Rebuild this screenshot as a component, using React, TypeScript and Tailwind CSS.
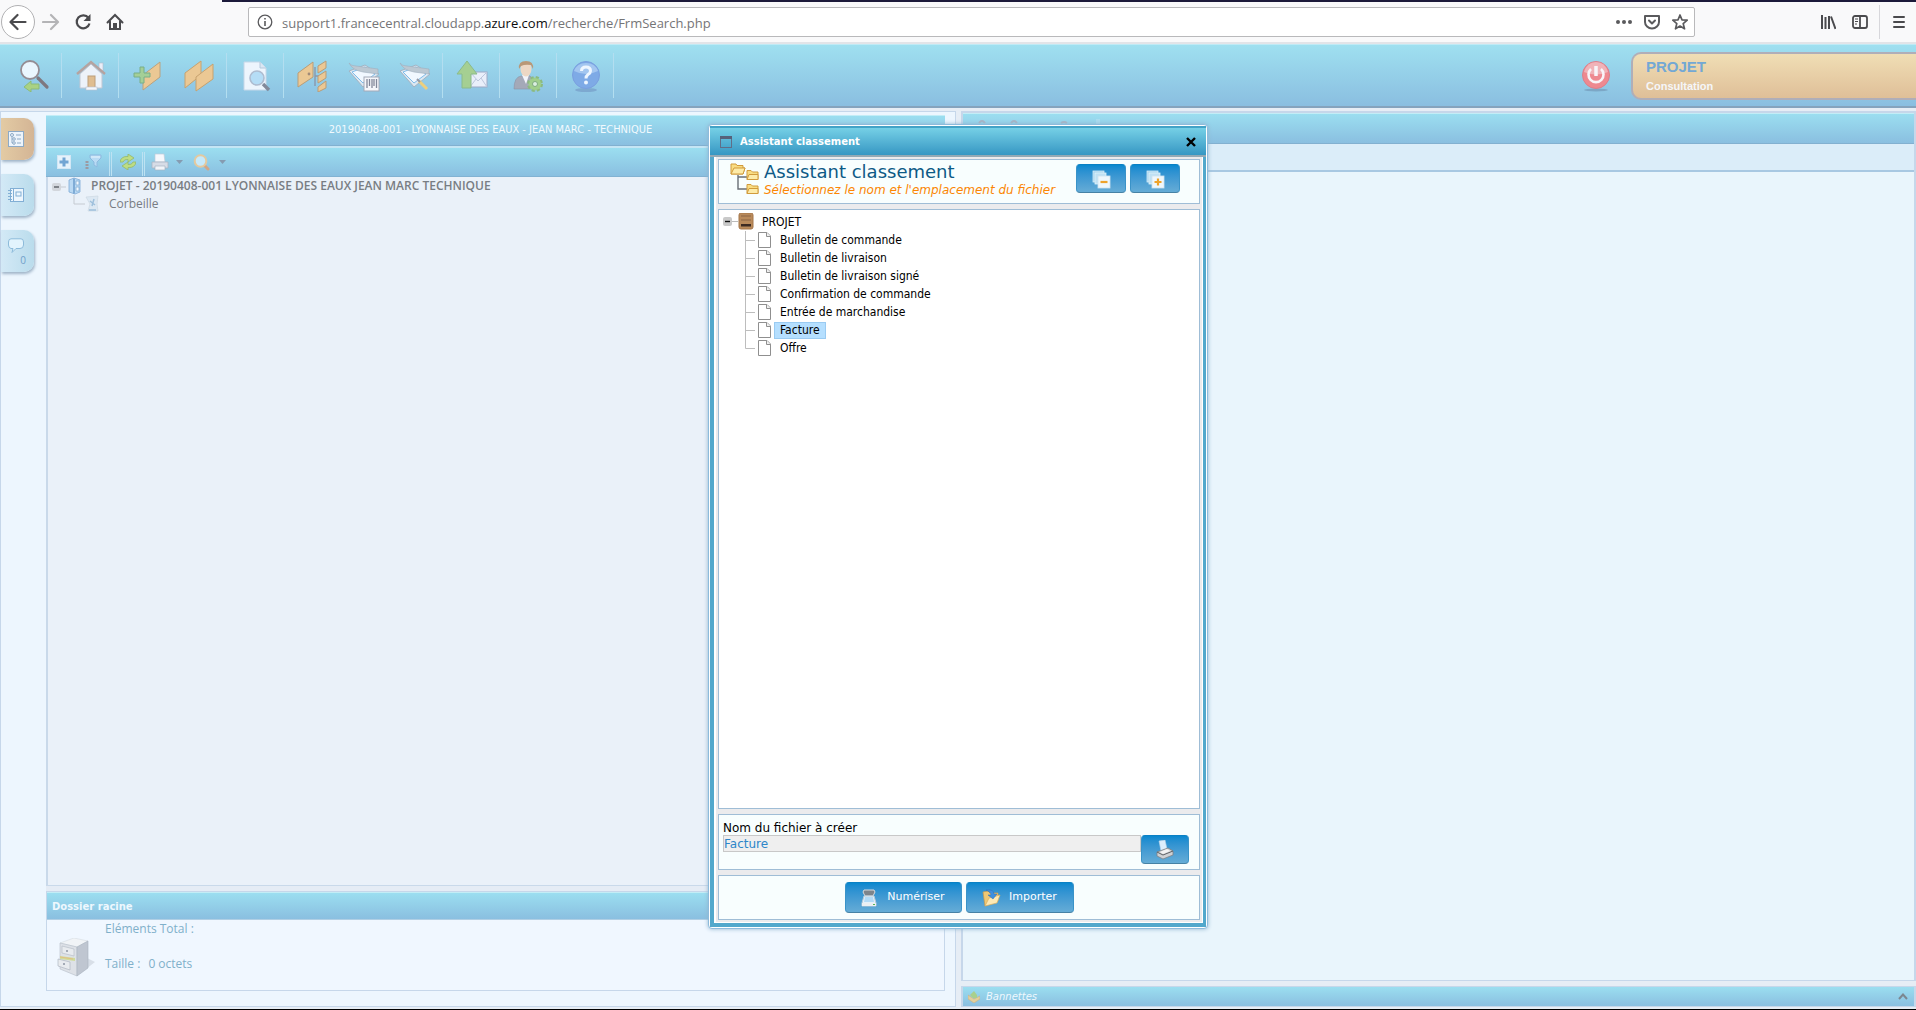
import React from "react";

const glossy = "bg-linear-to-b from-[#9bdef0] to-[#8abfe0]";
const tahoma = "font-['DejaVu_Sans_Condensed','DejaVu_Sans',sans-serif]";
const verdana = "font-['DejaVu_Sans',sans-serif]";
const treb = "font-['Open_Sans',sans-serif]";

function ToolButton({ label, children }: { label: string; children: React.ReactNode }) {
  return (
    <button type="button" aria-label={label} className="flex w-[51px] items-center justify-center">
      <svg width="32" height="32" viewBox="0 0 32 32" aria-hidden="true">
        {children}
      </svg>
    </button>
  );
}

function ToolGroup({ children }: { children: React.ReactNode }) {
  return <div className="flex h-[45px] border-r border-[#b3def0] pr-[2px] pl-[3px]">{children}</div>;
}

function Scanner() {
  return (
    <g>
      <path d="M1 11 L17 5 L31 14 L15 27 Z" fill="#dce8f2" stroke="#a3b3c2" />
      <path d="M4 12 L17 7 L27 14 L15 23 Z" fill="#f1f8ff" stroke="#7fbbe8" />
      <path d="M1 3 Q3 6 8 6 L30 9 L30 14 L15 12 Q4 10 1 3 Z" fill="#bcc8d2" stroke="#a0afbd" strokeWidth=".6" />
    </g>
  );
}

function MainToolbar() {
  return (
    <header className="flex h-16 shrink-0 items-center justify-between border-t border-b-2 border-t-[#bfeaf5] border-b-[#85a3bd] bg-linear-to-b from-[#9fe0f0] to-[#8abee0]">
      <nav className="flex items-center pl-[5px]" aria-label="Outils">
        <ToolGroup>
          <ToolButton label="Retour à la recherche">
            <path d="M20 18 L29 27" stroke="#7e7880" strokeWidth="3.2" strokeLinecap="round" />
            <circle cx="12" cy="10" r="9" fill="#eaf6fe" stroke="#958d94" strokeWidth="1.8" />
            <path d="M6 27 L13 21 V24 H21 V29 H13 V32 Z" fill="#a9d283" stroke="#8cbb78" />
          </ToolButton>
        </ToolGroup>
        <ToolGroup>
          <ToolButton label="Accueil">
            <rect x="24" y="3" width="4" height="8" fill="#e9eef8" stroke="#b5b9c8" strokeWidth=".6" />
            <path d="M5 14 L16 4 L27 14 V28 H5 Z" fill="#edf2f9" stroke="#c0c7d3" />
            <path d="M2 14 L16 2 L30 14" fill="none" stroke="#b5a3a0" strokeWidth="2.4" />
            <rect x="13" y="16" width="7" height="12" fill="#dfbd90" stroke="#bc9d7a" />
            <rect x="11" y="27" width="11" height="3" fill="#f3f6fb" stroke="#b9c1cf" strokeWidth=".6" />
          </ToolButton>
        </ToolGroup>
        <ToolGroup>
          <ToolButton label="Ajouter un dossier">
            <path d="M11 15 L28 2 V17 L11 30 Z" fill="#ebc894" stroke="#b9a280" />
            <path d="M8 7 h4 v6 h6 v4 h-6 v6 h-4 v-6 h-6 v-4 h6 Z" fill="#a4cf97" stroke="#79ae88" />
          </ToolButton>
          <ToolButton label="Dossiers">
            <path d="M2 13 L18 1 V15 L2 28 Z" fill="#ebc894" stroke="#c7a26f" />
            <path d="M13 17 L30 4 V19 L13 31 Z" fill="#ebc894" stroke="#c7a26f" />
          </ToolButton>
        </ToolGroup>
        <ToolGroup>
          <ToolButton label="Aperçu">
            <path d="M4 2 H20 L26 8 V30 H4 Z" fill="#edf5fd" stroke="#c6d7e8" />
            <path d="M20 2 V8 H26" fill="#dbe7f3" stroke="#b6c9dc" />
            <circle cx="17" cy="18" r="7" fill="#b5ddf6" stroke="#aebcd0" strokeWidth="1.6" />
            <path d="M23 24 L29 30" stroke="#82899a" strokeWidth="3.4" />
          </ToolButton>
        </ToolGroup>
        <ToolGroup>
          <ToolButton label="Arborescence">
            <path d="M1 13 L16 2 V17 L1 27 Z" fill="#ebc894" stroke="#b99d78" />
            <circle cx="12" cy="14" r="1.4" fill="#a08a78" />
            <path d="M18 7 V26 M18 16 H22" stroke="#8b98aa" strokeWidth="1.4" />
            <path d="M21 6 L29 1 V8 L21 13 Z M21 16 L29 11 V18 L21 23 Z M21 27 L29 21 V28 L21 32 Z" fill="#ebc894" stroke="#b99d78" />
          </ToolButton>
          <ToolButton label="Numériser code-barres">
            <Scanner />
            <rect x="16" y="17" width="15" height="14" fill="#f5f6fa" stroke="#a3a9b8" />
            <path d="M19 19 V28 M21.500 19 V26 M24 19 V28 M26 19 V26 M28.500 19 V28" stroke="#83889a" strokeWidth="1.300" />
          </ToolButton>
          <ToolButton label="Numériser">
            <Scanner />
            <path d="M20 21 L28 29" stroke="#edcf7c" strokeWidth="3" />
            <path d="M18 19 L21 22" stroke="#969ba8" strokeWidth="2" />
          </ToolButton>
        </ToolGroup>
        <ToolGroup>
          <ToolButton label="Envoyer">
            <rect x="14" y="12" width="17" height="15" fill="#e9effa" stroke="#9da9c6" />
            <path d="M14 12 L22 21 L31 12 M14 27 L20 19 M31 27 L25 18" fill="none" stroke="#bcc6dc" />
            <path d="M1 14 L11 1 L21 14 H15 V28 H6 V14 Z" fill="#a5cf92" stroke="#8bbb8a" />
          </ToolButton>
        </ToolGroup>
        <ToolGroup>
          <ToolButton label="Utilisateur">
            <path d="M1 29 Q1 17 8 16 L17 16 Q21 18 21 29 Z" fill="#a4a9b8" stroke="#8b93a6" strokeWidth=".6" />
            <path d="M9 15 L13 24 L16 15 Z" fill="#f3f5fb" />
            <ellipse cx="13" cy="9" rx="5.500" ry="7.500" fill="#edd8c5" />
            <path d="M6 9 Q5 1 13 1 Q21 1 20 9 L18 5 Q12 4 8 6 Z" fill="#b99877" />
            <circle cx="22" cy="24" r="6.500" fill="#a0cf8c" stroke="#8cba80" strokeWidth="3" strokeDasharray="3 2.100" />
            <circle cx="22" cy="24" r="6" fill="#a0cf8c" />
            <circle cx="22" cy="24" r="2.500" fill="#dcefe0" stroke="#7fac80" />
          </ToolButton>
        </ToolGroup>
        <ToolGroup>
          <ToolButton label="Aide">
            <ellipse cx="16" cy="30" rx="11" ry="2" fill="#7da9d0" />
            <circle cx="16" cy="15" r="13.500" fill="#7eaae6" stroke="#7a9fdf" />
            <path d="M4 11 Q7 3 16 3 Q25 3 28 11 Q16 17 4 11 Z" fill="#a3c6f0" />
            <path d="M11.500 11 Q11.500 7 16 7 Q20.500 7 20.500 11 Q20.500 13 18 14.500 Q16 16 16 18.500" fill="none" stroke="#eef6ff" strokeWidth="3" />
            <circle cx="16" cy="22.500" r="2" fill="#eef6ff" />
          </ToolButton>
        </ToolGroup>
      </nav>
      <div className="flex items-center gap-[21px]">
        <button type="button" aria-label="Déconnexion">
          <svg width="28" height="32" viewBox="0 0 28 32" aria-hidden="true">
            <ellipse cx="14" cy="30" rx="12" ry="1.500" fill="#7ca7c6" />
            <circle cx="14" cy="15" r="13.500" fill="#ee8990" stroke="#db7f8b" />
            <path d="M2 12 Q5 2 14 2 Q23 2 26 12 Q14 17 2 12 Z" fill="#f0b3b8" />
            <path d="M9 9 A7.500 7.500 0 1 0 19 9" fill="none" stroke="#f8f4f8" strokeWidth="2.600" />
            <path d="M14 6 V16" stroke="#f8f4f8" strokeWidth="3.500" />
          </svg>
        </button>
        <button type="button" className="flex h-12 w-[285px] flex-col justify-center rounded-l-[10px] border-2 border-r-0 border-[#b0aeb8] bg-linear-to-b from-[#f0deb5] to-[#dfbf98] pl-[13px] text-left font-['Liberation_Sans',sans-serif] font-bold">
          <span className="text-[15px] leading-5 text-[#73a8d4]">PROJET</span>
          <span className="text-[11px] leading-[18px] text-[#f5f6f9]">Consultation</span>
        </button>
      </div>
    </header>
  );
}

function BrowserBar() {
  return (
    <div className="flex h-11 shrink-0 flex-col border-b-2 border-[#e2e4e8] bg-[#f9f9fa]">
      <div className="ml-[222px] h-[2px] shrink-0 bg-[#1c1a3a]" />
      <div className="flex flex-1 items-center">
        <div className="flex w-[248px] items-center pl-px text-[#4a4a4d]">
          <button type="button" aria-label="Page précédente" className="flex size-[34px] items-center justify-center rounded-full border border-[#b1b1b3] bg-white">
            <svg width="18" height="18" viewBox="0 0 18 18" fill="none" stroke="currentColor" strokeWidth="2.200" strokeLinecap="round" strokeLinejoin="round"><path d="M16.500 9 H2 M8.500 2 L1.500 9 L8.500 16" /></svg>
          </button>
          <button type="button" aria-label="Page suivante" className="ml-[7px] text-[#b4b4b6]">
            <svg width="18" height="18" viewBox="0 0 18 18" fill="none" stroke="currentColor" strokeWidth="2.200" strokeLinecap="round" strokeLinejoin="round"><path d="M1 9 H15.500 M9 2 L16 9 L9 16" /></svg>
          </button>
          <button type="button" aria-label="Actualiser" className="ml-[14px]">
            <svg width="18" height="18" viewBox="0 0 18 18" fill="none" stroke="currentColor" strokeWidth="2.200"><path d="M14.500 5 A6.500 6.500 0 1 0 15.500 10.500" /><path d="M16.500 1 V8 H9.500 Z" fill="currentColor" stroke="none" /></svg>
          </button>
          <button type="button" aria-label="Accueil" className="ml-[14px]">
            <svg width="18" height="18" viewBox="0 0 18 18" fill="none" stroke="currentColor" strokeWidth="2"><path d="M1.500 9.500 L9 2 L16.500 9.500 M4 8.500 V16 H14 V8.500" strokeLinecap="round" /><path d="M8 16 V11 H10 V16" /></svg>
          </button>
        </div>
        <div className="flex h-[30px] flex-1 items-center rounded-[2px] border border-[#b9b9bb] bg-white pr-[6px] pl-2 text-[#5a5a5d]">
          <svg width="16" height="16" viewBox="0 0 16 16" fill="none" stroke="currentColor" strokeWidth="1.300" aria-hidden="true"><circle cx="8" cy="8" r="6.800" /><path d="M8 7 V12 M8 4 V5.500" strokeWidth="1.600" /></svg>
          <div className={`${treb} flex-1 pt-px pl-[9px] text-[13px] leading-5 text-[#757577]`}>
            support1.francecentral.cloudapp.<span className="text-[#0c0c0d]">azure.com</span>/recherche/FrmSearch.php
          </div>
          <div className="flex items-center gap-3">
            <button type="button" aria-label="Actions"><svg width="16" height="16" viewBox="0 0 16 16" fill="currentColor"><circle cx="2" cy="8" r="2" /><circle cx="8" cy="8" r="2" /><circle cx="14" cy="8" r="2" /></svg></button>
            <button type="button" aria-label="Pocket"><svg width="16" height="16" viewBox="0 0 16 16" fill="none" stroke="currentColor" strokeWidth="2" strokeLinecap="round" strokeLinejoin="round"><path d="M1 2 H15 V8 A7 6.500 0 0 1 1 8 Z M5 6.500 L8 9.500 L11 6.500" /></svg></button>
            <button type="button" aria-label="Marque-page"><svg width="16" height="16" viewBox="0 0 16 16" fill="none" stroke="currentColor" strokeWidth="1.700" strokeLinejoin="round"><path d="M8 1 L10 5.800 L15.200 6.200 L11.200 9.600 L12.500 14.800 L8 12 L3.500 14.800 L4.800 9.600 L.8 6.200 L6 5.800 Z" /></svg></button>
          </div>
        </div>
        <div className="flex w-[221px] items-center justify-end pr-[10px] text-[#4a4a4d]">
          <button type="button" aria-label="Bibliothèque"><svg width="16" height="16" viewBox="0 0 16 16" fill="none" stroke="currentColor" strokeWidth="2"><path d="M2 1 V15 M5.500 3 V15 M9 2 V15 M11 2.500 L15.500 15" /></svg></button>
          <button type="button" aria-label="Panneau latéral" className="ml-4"><svg width="16" height="16" viewBox="0 0 16 16" fill="none" stroke="currentColor" strokeWidth="1.800"><rect x="1" y="2" width="14" height="12" rx="2" /><path d="M8 2 V14" /><path d="M3 5 H6 M3 7.500 H6 M3 10 H5" strokeWidth="1" /></svg></button>
          <div className="ml-[11px] h-[34px] w-px bg-[#d7d7db]" />
          <button type="button" aria-label="Menu" className="ml-[12px]"><svg width="14" height="16" viewBox="0 0 14 16" stroke="currentColor" strokeWidth="2" strokeLinecap="round"><path d="M2 3 H12 M2 8 H12 M2 13 H12" /></svg></button>
        </div>
      </div>
    </div>
  );
}

function SideTabs() {
  const base = "flex h-[42px] w-[33px] rounded-r-[10px] shadow-[1px_2px_3px_#9fb4c8]";
  const blue = "bg-linear-to-r from-[#d3e9f6] to-[#badcec]";
  return (
    <div className="flex w-[45px] shrink-0 flex-col gap-[14px] pt-[6px]">
      <button type="button" aria-label="Arborescence" className={`${base} items-center bg-linear-to-r from-[#e3cba4] to-[#d4b595] pl-[7px]`}>
        <svg width="16" height="16" viewBox="0 0 16 16" fill="none" stroke="#8daac6" aria-hidden="true"><rect x=".5" y=".5" width="15" height="15" fill="#edf4fb" /><circle cx="4" cy="4" r="1.500" /><circle cx="6" cy="8" r="1.300" /><circle cx="6" cy="12" r="1.300" /><path d="M4 6 V12 H5 M8 4 H13 M9 8 H13 M9 12 H13" /></svg>
      </button>
      <button type="button" aria-label="Index" className={`${base} ${blue} items-center pl-[7px]`}>
        <svg width="16" height="16" viewBox="0 0 16 16" fill="none" stroke="#82afd5" aria-hidden="true"><rect x="2.500" y="1.500" width="13" height="13" fill="#edf6fd" /><path d="M5.500 2 V14 M0 3.500 H4 M0 6.500 H4 M0 9.500 H4 M0 12.500 H4" /><rect x="8" y="5" width="5" height="4" /></svg>
      </button>
      <button type="button" aria-label="Commentaires : 0" className={`${base} ${blue} flex-col pt-2 pl-[7px]`}>
        <svg width="16" height="15" viewBox="0 0 16 15" fill="#e3f4fd" stroke="#8dbbda" aria-hidden="true"><path d="M3 .8 H13 Q15.500 .8 15.500 4 V7 Q15.500 10.500 12 10.500 H8 L4 14.500 L5 10.500 H3 Q.5 10 .5 7 V4 Q.5 .8 3 .8 Z" /></svg>
        <span className={`${treb} w-[18px] text-right text-[10px] leading-[14px] text-[#70a0ca]`}>0</span>
      </button>
    </div>
  );
}

function TreeToolbar() {
  const sep = "h-6 w-[3px] border-x border-[#bde2f2] self-end";
  return (
    <div className={`flex h-[31px] shrink-0 items-center border-t-2 border-b border-t-[#c5e5f4] border-b-[#82b2d2] pl-[11px] ${glossy}`}>
      <button type="button" aria-label="Développer"><svg width="14" height="14" viewBox="0 0 14 14"><rect x=".5" y=".5" width="13" height="13" fill="#e6f2fb" stroke="#d3e7f5" /><path d="M7 2.500 V11.500 M2.500 7 H11.500" stroke="#72a5d3" strokeWidth="3" /></svg></button>
      <button type="button" aria-label="Filtrer" className="ml-[14px]"><svg width="17" height="17" viewBox="0 0 17 17"><path d="M5 1 H16 V4 L12 8 V13 L9 11 V8 L5 4 Z" fill="#b9dbf4" stroke="#8db9df" /><path d="M6 3 H15" stroke="#e8f4fd" /><path d="M2 7 V15" stroke="#9b9aa2" strokeWidth="3" strokeDasharray="2 1" /></svg></button>
      <span className={`${sep} ml-[7px]`} />
      <button type="button" aria-label="Actualiser" className="ml-2"><svg width="16" height="16" viewBox="0 0 16 16" fill="#bedd83" stroke="#93b96b" strokeWidth=".8"><path d="M0 8 Q1 2 8 2.500 L8 0 L14 4 L8 8 V5.500 Q4 5 3 8 Z" /><path d="M16 8 Q15 14 8 13.500 L8 16 L2 12 L8 8 V10.500 Q12 11 13 8 Z" /></svg></button>
      <span className={`${sep} ml-[6px]`} />
      <button type="button" aria-label="Imprimer" className="ml-[6px] flex items-center gap-[7px]">
        <svg width="18" height="18" viewBox="0 0 18 18"><path d="M4 1 H13 L14 9 H4 Z" fill="#f6f8fc" stroke="#c0cbd8" strokeWidth=".7" /><path d="M1 9 H17 V15 H1 Z" fill="#d7dce6" stroke="#a8b4c3" strokeWidth=".8" /><path d="M4 13 H14 V17 H4 Z" fill="#f1f4f9" stroke="#a8b4c3" strokeWidth=".7" /></svg>
        <svg width="7" height="4" viewBox="0 0 7 4"><path d="M0 0 H7 L3.500 4 Z" fill="#859bb1" /></svg>
      </button>
      <button type="button" aria-label="Rechercher" className="ml-[10px] flex items-center gap-[9px]">
        <svg width="17" height="17" viewBox="0 0 17 17"><path d="M11 11 L15 15" stroke="#d1a687" strokeWidth="3" strokeLinecap="round" /><circle cx="7.500" cy="7" r="5.800" fill="#c6e9fa" stroke="#e3c99f" strokeWidth="2" /></svg>
        <svg width="7" height="4" viewBox="0 0 7 4"><path d="M0 0 H7 L3.500 4 Z" fill="#859bb1" /></svg>
      </button>
    </div>
  );
}

function LeftPane() {
  return (
    <section className="flex w-[956px] shrink-0 border border-[#c6d7ea] bg-[#edf6fe]">
      <SideTabs />
      <div className="mt-[3px] mr-[10px] mb-[15px] flex min-w-0 flex-1 flex-col bg-[#e5ecf5]">
        <h1 className={`${tahoma} flex h-[31px] shrink-0 items-center justify-center border-t border-b border-t-[#c3edf6] border-b-[#82b0d0] pr-[10px] text-[11px] text-[#f2fafe] ${glossy}`}>
          20190408-001 - LYONNAISE DES EAUX - JEAN MARC - TECHNIQUE
        </h1>
        <TreeToolbar />
        <ul className={`${treb} flex-1 border-b border-l-2 border-[#c9d9ea] bg-[#eaf1f9] pl-[4px] text-[12px] text-[#787d83]`}>
          <li>
            <div className="flex h-[18px] items-center font-semibold">
              <svg width="33" height="18" viewBox="0 0 33 18" aria-hidden="true"><rect x="0" y="6" width="9" height="8" rx="2" fill="#d2d6dc" /><path d="M2 10 H7" stroke="#62676e" strokeWidth="1.500" /><path d="M9 10 H14" stroke="#c5cad1" /><path d="M17 3 L22 1 L28 3 V15 L23 17 L17 15 Z" fill="#b9d9f4" stroke="#7fabd7" strokeWidth=".8" /><path d="M22 1.500 V16.500" stroke="#6d9dcc" strokeWidth="1.500" /><path d="M24 4 H27 V8 H24 Z M24 10 H27 V14 H24 Z" fill="#f4f9fe" stroke="#84aed6" strokeWidth=".8" /></svg>
              <span className="pl-[6px]">PROJET - 20190408-001 LYONNAISE DES EAUX JEAN MARC TECHNIQUE</span>
            </div>
            <ul>
              <li className="flex h-[18px] items-center pl-[21px]">
                <svg width="32" height="18" viewBox="0 0 32 18" aria-hidden="true"><path d="M1 0 V9 H12" fill="none" stroke="#c5cad1" /><path d="M13 2 L25 1 L24 9 L25 16 H15 L17 9 Z" fill="#dce8f3" stroke="#cdd8e3" strokeWidth=".7" /><path d="M17 6 L22 10 M21 4 L19 11 M16 15 H23" stroke="#9fc0dc" strokeWidth="1.500" /></svg>
                <span className="pl-1">Corbeille</span>
              </li>
            </ul>
          </li>
        </ul>
        <div className={`${treb} mt-[5px] flex h-[100px] shrink-0 flex-col border border-[#c6d7ea] bg-[#f0f7ff]`}>
          <h2 className={`${verdana} flex h-7 shrink-0 items-center border-t border-b border-t-[#c3edf6] border-b-[#b0cfe4] pl-[5px] text-[10px] font-bold text-[#eef8fe] ${glossy}`}>Dossier racine</h2>
          <div className="flex pl-[10px] text-[12px] text-[#80b0ca]">
            <svg className="mt-[18px]" width="38" height="40" viewBox="0 0 38 40" aria-hidden="true"><path d="M20 38 L38 24 L30 20 Z" fill="#d8dfe8" /><path d="M3 5 L17 0 L31 3 L20 9 Z" fill="#f1f4f7" stroke="#d5dbe1" strokeWidth=".6" /><path d="M3 5 L20 9 V38 L3 31 Z" fill="#dde1e7" stroke="#b5bdc8" strokeWidth=".6" /><path d="M20 9 L31 3 V30 L20 38 Z" fill="#bfc6d1" stroke="#aab3c0" strokeWidth=".6" /><path d="M5 8 L17 11 V18 L5 15 Z" fill="#e8ebef" stroke="#b7bfc9" strokeWidth=".7" /><path d="M3 18 L18 20 V23 L3 21 Z" fill="#cfdc9a" /><path d="M3 19 L16 21" stroke="#e4bd85" /><path d="M1 21 L13 24 V32 L1 28 Z" fill="#e8ebef" stroke="#b0b8c3" strokeWidth=".7" /><circle cx="10" cy="13" r="1" fill="#8c95a3" /><circle cx="7" cy="26" r="1" fill="#8c95a3" /></svg>
            <dl className="ml-[10px] leading-[17px]">
              <div className="flex h-[35px] gap-2"><dt>Eléments Total :</dt></div>
              <div className="flex gap-2"><dt>Taille :</dt><dd>0 octets</dd></div>
            </dl>
          </div>
        </div>
      </div>
    </section>
  );
}

function RightPane() {
  return (
    <section className="flex min-w-0 flex-1 flex-col">
      <div className="flex flex-1 flex-col border-t-2 border-r-2 border-b border-l-2 border-[#c6d7ea] bg-[#e9f5fc]">
        <div className={`h-[31px] shrink-0 border-t border-b border-t-[#c3edf6] border-b-[#82b0d0] ${glossy}`}>
          <svg className="ml-[14px]" width="140" height="22" viewBox="0 0 140 22" aria-hidden="true"><path d="M2 9 Q5 5 8 9 M34 9 Q37 5 40 9 M84 9 Q87 7 90 9" fill="none" stroke="#a8b4c4" strokeWidth="2" /><path d="M120 5 V22 M122 5 V22" stroke="#bde2f2" /></svg>
        </div>
        <div className="h-7 shrink-0 border-b-2 border-[#a8c8e2] bg-[#dbedf9]" />
      </div>
      <div className={`mt-[5px] mb-[2px] flex h-[21px] shrink-0 items-center justify-between border-t border-r-2 border-b border-l-2 border-[#c6d7ea] pr-[6px] pl-[5px] ${glossy}`}>
        <div className="flex items-center gap-[6px]">
          <svg width="12" height="12" viewBox="0 0 12 12" aria-hidden="true"><path d="M0 4 L6 8 L12 5 V8 L6 12 L0 8 Z" fill="#e3cf9b" stroke="#c7b284" strokeWidth=".6" /><path d="M2 4 L6 0 L9 4 V7 H5 Z" fill="#a9d08c" /></svg>
          <h2 className={`${verdana} text-[10px] text-[#eef8fe] italic`}>Bannettes</h2>
        </div>
        <button type="button" aria-label="Ouvrir les bannettes"><svg width="10" height="7" viewBox="0 0 10 7"><path d="M1 6 L5 1.500 L9 6" fill="none" stroke="#7b8790" strokeWidth="2" /></svg></button>
      </div>
    </section>
  );
}

const documents = [
  "Bulletin de commande",
  "Bulletin de livraison",
  "Bulletin de livraison signé",
  "Confirmation de commande",
  "Entrée de marchandise",
  "Facture",
  "Offre",
];

const dialogButton =
  "flex items-center justify-center rounded-[4px] border border-t-[#0a80c4] border-x-[#3a93c8] border-b-[#4682a5] bg-linear-to-b from-[#0588cf] to-[#65acd6] text-white";

function StackIcon({ plus }: { plus?: boolean }) {
  return (
    <svg width="20" height="20" viewBox="0 0 20 20" aria-hidden="true">
      <rect x="2" y="2" width="11" height="11" fill="#a8d5ef" stroke="#d5ecf8" strokeWidth=".8" />
      <rect x="4" y="4" width="11" height="11" fill="#bfe1f4" stroke="#e1f2fb" strokeWidth=".8" />
      <rect x="7" y="7" width="12" height="12" fill="#eef7fc" stroke="#cfe3ef" strokeWidth=".8" />
      <path d={plus ? "M9.500 13 H16.500 M13 9.500 V16.500" : "M9.500 13 H16.500"} stroke="#eda32c" strokeWidth="2.200" />
    </svg>
  );
}

function FolderTreeIcon() {
  const folder = "M0 1 H4 L5.500 2.500 H11 V10 H0 Z";
  return (
    <svg width="30" height="32" viewBox="0 0 30 32" aria-hidden="true">
      <path d="M8 12 V26 H17 M8 14 H17" fill="none" stroke="#6a6f76" strokeWidth="1.400" />
      <g fill="#f9dc82" stroke="#d19b3c">
        <path d="M1 1 H6 L7 2.500 H13 V5 H15 L13 11 H1 Z" />
        <path d="M4 5 H15 L13 11 H1 Z" fill="#fdeba8" />
        <g transform="translate(17 6.500)"><path d={folder} /><path d="M2 5 H11 V10 H0 Z" fill="#fdeba8" /></g>
        <g transform="translate(17 20.500)"><path d={folder} /><path d="M2 5 H11 V10 H0 Z" fill="#fdeba8" /></g>
      </g>
    </svg>
  );
}

function FilingDialog() {
  const box = "border border-[#9fbdd6]";
  return (
    <div role="dialog" aria-labelledby="dialog-title" className="absolute top-[124px] left-1/2 flex h-[805px] w-[500px] -translate-x-1/2 flex-col rounded-[4px] border border-[#8dbbdc] bg-white p-px shadow-[0_0_4px_#8fb4cf]">
      <div className="flex h-[31px] shrink-0 items-center border-t-2 border-b-2 border-t-[#43a3c7] border-b-[#93a9b5] bg-linear-to-b from-[#75d0e6] to-[#3597c3] px-[10px]">
        <svg width="12" height="12" viewBox="0 0 12 12" aria-hidden="true"><rect x=".5" y=".5" width="11" height="11" fill="none" stroke="#606e88" /><rect width="12" height="3" fill="#56617a" /></svg>
        <span id="dialog-title" className={`${verdana} flex-1 pl-2 text-[10px] leading-4 font-bold text-white`}>Assistant classement</span>
        <button type="button" aria-label="Fermer"><svg width="10" height="10" viewBox="0 0 10 10"><path d="M1 1 L9 9 M9 1 L1 9" stroke="#000" strokeWidth="2.400" /></svg></button>
      </div>
      <div className="flex flex-1 flex-col border-r-3 border-b-4 border-l-4 border-[#52a8cc] bg-white pr-px pb-px pl-[2px]">
        <div className="flex flex-1 flex-col gap-[5px] bg-[#ebebed] p-[2px]">
          <div className={`${box} flex h-[45px] shrink-0 bg-[#f8fefe] pl-[11px]`}>
            <div className="mt-[3px]"><FolderTreeIcon /></div>
            <div className={`${verdana} ml-1 flex-1`}>
              <h2 className="mt-px text-[18px] leading-[22px] text-[#0d5a86]">Assistant classement</h2>
              <p className="text-[12px] leading-[14px] text-[#fb8604] italic">Sélectionnez le nom et l'emplacement du fichier</p>
            </div>
            <div className="mt-1 mr-[19px] flex gap-1">
              <button type="button" aria-label="Tout réduire" className={`${dialogButton} h-[29px] w-[50px]`}><StackIcon /></button>
              <button type="button" aria-label="Tout développer" className={`${dialogButton} h-[29px] w-[50px]`}><StackIcon plus /></button>
            </div>
          </div>
          <div className={`${box} ${tahoma} flex-1 bg-white pt-[3px] pl-1 text-[12px] text-black`}>
            <div className="flex h-[18px] items-center">
              <svg width="32" height="18" viewBox="0 0 32 18" aria-hidden="true"><rect x="0" y="4" width="9" height="9" rx="2" fill="#c9c9c9" /><path d="M2 8.500 H7" stroke="#111" strokeWidth="1.400" /><path d="M9 8.500 H15" stroke="#bbb" /><rect x="16" y="0" width="14" height="16" rx="2" fill="#b98a5b" stroke="#a5764b" /><path d="M18 3 H28 M18 7 H28" stroke="#8b6446" /><rect x="18" y="11" width="10" height="2.500" fill="#3c2a22" /></svg>
              <span className="pl-[7px]">PROJET</span>
            </div>
            <ul>
              {documents.map((name, i) => (
                <li key={name} className="flex h-[18px] items-center pl-[21px]">
                  <svg width="28" height="18" viewBox="0 0 28 18" aria-hidden="true">
                    <path d={i === documents.length - 1 ? "M1.500 0 V9.500 H11" : "M1.500 0 V18 M1.500 9.500 H11"} fill="none" stroke="#bdbdbd" />
                    <path d="M14.500 1.500 H23 L26.500 5 V16.500 H14.500 Z" fill="#fff" stroke="#8f8f8f" />
                    <path d="M22.500 1.500 V5.500 H26.500" fill="#f0f0f0" stroke="#8f8f8f" />
                  </svg>
                  <button type="button" className={name === "Facture" ? "ml-[2px] border border-[#9acbf2] bg-[#b5dfff] px-[5px] leading-[15px]" : "ml-[2px] border border-transparent px-[5px] leading-[15px]"}>{name}</button>
                </li>
              ))}
            </ul>
          </div>
          <div className={`${box} ${verdana} h-14 shrink-0 bg-[#f8fefe] pt-1 pr-[10px] pl-1 text-[12px]`}>
            <label htmlFor="file-name" className="block h-4 leading-[18px] text-black">Nom du fichier à créer</label>
            <div className="flex items-start">
              <input id="file-name" readOnly value="Facture" className="h-[17px] min-w-0 flex-1 border border-[#c8c8c8] bg-[#efefef] text-[#2d86c9]" />
              <button type="button" aria-label="Imprimer" className={`${dialogButton} h-[29px] w-12`}>
                <svg width="18" height="20" viewBox="0 0 18 20" aria-hidden="true"><path d="M3 1 L9 0 L11 9 L5 11 Z" fill="#dceefc" stroke="#b8d4ea" strokeWidth=".6" /><path d="M1 12 L12 8 L17 11 V15 L7 19 L1 16 Z" fill="#cfd1d4" stroke="#7d8186" strokeWidth=".8" /><path d="M1 12 L7 15 L17 11" fill="none" stroke="#5d6166" /><path d="M4 12 L11 9 L14 11 L7 14 Z" fill="#f3f3f3" /></svg>
              </button>
            </div>
          </div>
          <div className={`${box} ${verdana} flex h-[45px] shrink-0 items-center justify-center gap-1 bg-[#f8fefe] text-[11px]`}>
            <button type="button" className={`${dialogButton} h-[31px] w-[117px] gap-[10px]`}>
              <svg width="16" height="18" viewBox="0 0 16 18" aria-hidden="true"><path d="M3 1 H13 L14 3 L12 7 H4 L2 3 Z" fill="#7d848b" stroke="#d6dade" /><path d="M3 7 H13 L15 14 V17 H1 V14 Z" fill="#e5f1fa" stroke="#b8cbd9" /><path d="M4 8 H12 L13 13 H3 Z" fill="#b3dbf7" /><path d="M1 14 H15 V17 H1 Z" fill="#eceff2" /><rect x="12" y="15" width="2" height="1" fill="#57b657" /></svg>
              Numériser
            </button>
            <button type="button" className={`${dialogButton} h-[31px] w-[108px] gap-2`}>
              <svg width="19" height="18" viewBox="0 0 19 18" aria-hidden="true"><path d="M1 3 L6 2 L8 4 L16 4 V12 L3 17 Z" fill="#f0c874" stroke="#c89a4a" strokeWidth=".7" /><path d="M3 17 L7 9 L18 6 L15 14 Z" fill="#fde9b4" stroke="#d9ad5d" strokeWidth=".7" /><path d="M4 1 Q12 0 12 5 H15 L11 10 L6 6 H9 Q9 3 4 1 Z" fill="#3c8fe0" stroke="#2a6cb8" strokeWidth=".5" /></svg>
              Importer
            </button>
          </div>
        </div>
      </div>
    </div>
  );
}

export default function App() {
  return (
    <div className="relative flex h-screen flex-col overflow-hidden border-b border-black bg-[#e6edf5]">
      <BrowserBar />
      <MainToolbar />
      <main className="mt-[3px] flex min-h-0 flex-1 gap-[5px]">
        <div className="flex pb-[2px]"><LeftPane /></div>
        <RightPane />
      </main>
      <FilingDialog />
    </div>
  );
}
